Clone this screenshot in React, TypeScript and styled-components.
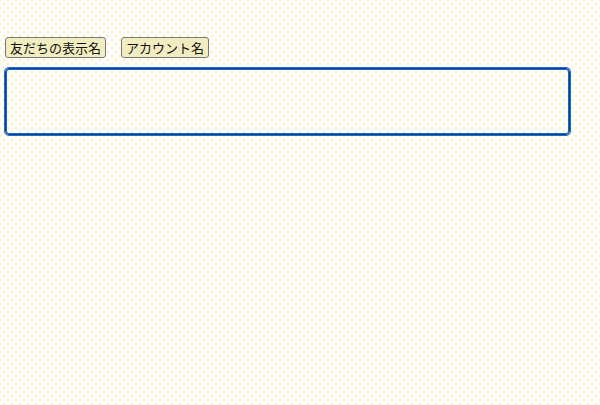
import styled, { createGlobalStyle } from "styled-components"

const GlobalStyle = createGlobalStyle`
    html, body {
        margin: 0;
        padding: 0;
        width: 100%;
        height: 100%;
    }
    body {
        background-color: #fdfdff;
        background-image:
            radial-gradient(circle, #f8ef7a 0.6px, transparent 0.9px),
            radial-gradient(circle, #f8ef7a 0.6px, transparent 0.9px);
        background-size: 8px 8px;
        background-position: 0 0, 4px 4px;
        font-family: "Noto Sans CJK JP", "Noto Sans", sans-serif;
    }
    #root {
        height: 100%;
    }
`

export default function App() {
    return (
        <>
            <GlobalStyle />
            <Page>
                <Toolbar>
                    <InsertButton type="button">友だちの表示名</InsertButton>
                    <InsertButton type="button">アカウント名</InsertButton>
                </Toolbar>
                <MessageInput />
            </Page>
        </>
    )
}

const Page = styled.div`
    display: flex;
    flex-direction: column;
    gap: 10px;
    padding: 37px 0 0 5px;
`
const Toolbar = styled.div`
    display: flex;
    align-items: center;
    gap: 15px;
`
const InsertButton = styled.button`
    height: 21px;
    padding: 0 4px;
    background-color: #f1edc0;
    border: 1px solid #7a7a7a;
    border-radius: 3px;
    color: #111;
    font-size: 13px;
    line-height: 19px;
    font-family: "Noto Sans CJK JP", "Noto Sans", sans-serif;
    cursor: pointer;
`
const MessageInput = styled.textarea`
    box-sizing: border-box;
    width: 565px;
    height: 67px;
    margin: 0;
    padding: 4px;
    background: transparent;
    border: 1px solid #0d3f8c;
    border-radius: 4px;
    box-shadow: 0 0 0 1px #1d6ad6, inset 0 0 0 1px #1a64d0;
    outline: none;
    resize: none;
    font-size: 13px;
    font-family: "Noto Sans CJK JP", "Noto Sans", sans-serif;
`
